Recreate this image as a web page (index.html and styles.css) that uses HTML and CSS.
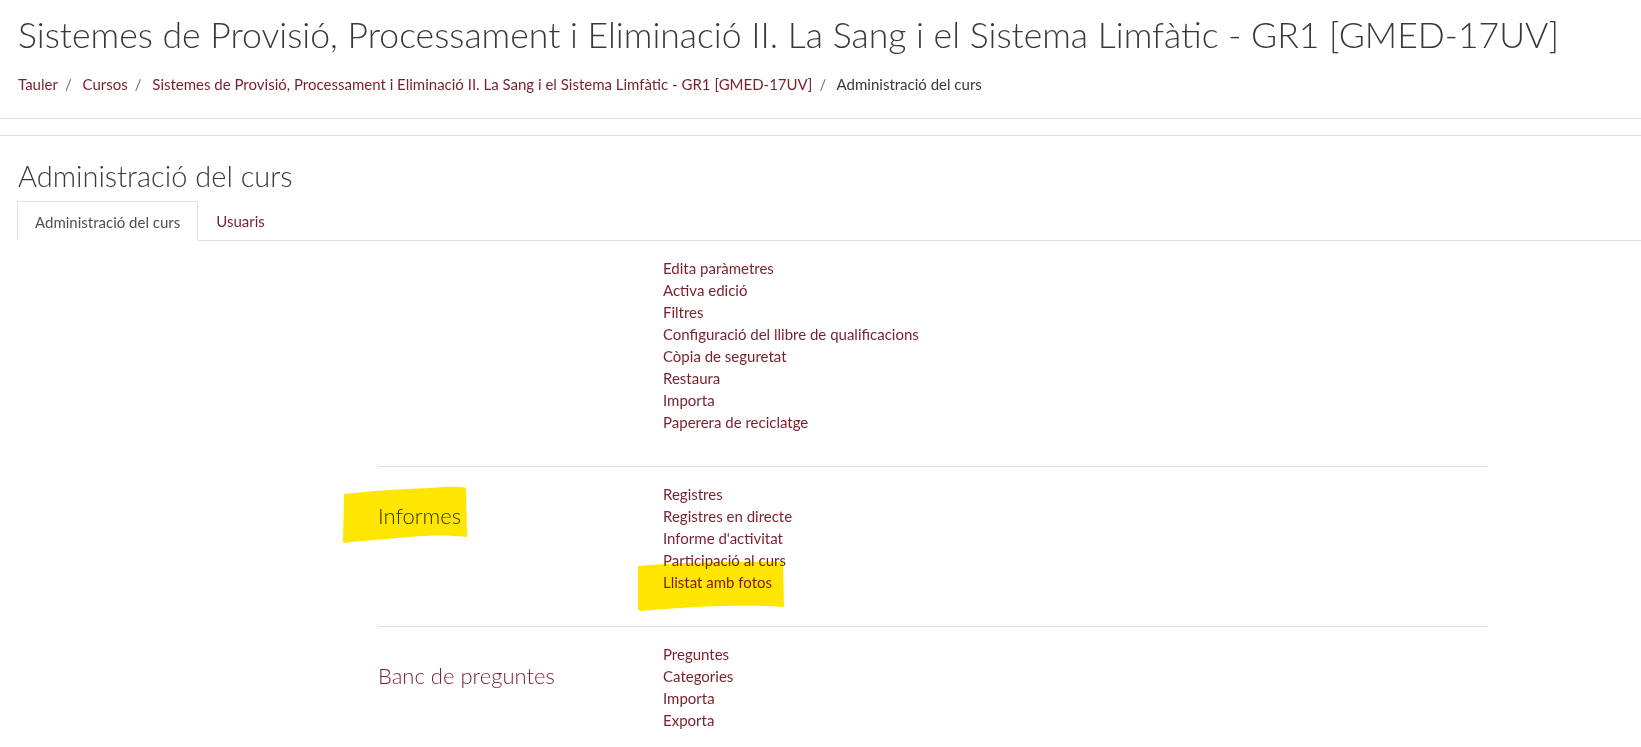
FILE: index.html
```html
<!DOCTYPE html>
<html lang="ca">
<head>
<meta charset="utf-8">
<title>Administració del curs</title>
<link rel="stylesheet" href="styles.css">
</head>
<body>
<header class="page-header">
  <h1 class="course-title">Sistemes de Provisió, Processament i Eliminació II. La Sang i el Sistema Limfàtic - GR1 [GMED-17UV]</h1>
  <nav class="breadcrumb">
    <a href="#">Tauler</a><span class="sep">/</span>
    <a href="#">Cursos</a><span class="sep">/</span>
    <a href="#">Sistemes de Provisió, Processament i Eliminació II. La Sang i el Sistema Limfàtic - GR1 [GMED-17UV]</a><span class="sep">/</span>
    <span class="current">Administració del curs</span>
  </nav>
</header>
<div class="divider"></div>
<main class="main">
  <h2 class="page-title">Administració del curs</h2>
  <ul class="tabs">
    <li class="tab active">Administració del curs</li>
    <li class="tab"><a href="#">Usuaris</a></li>
  </ul>
  <div class="sections">
    <section class="admin-row first">
      <div class="admin-head"></div>
      <ul class="admin-links">
        <li><a href="#">Edita paràmetres</a></li>
        <li><a href="#">Activa edició</a></li>
        <li><a href="#">Filtres</a></li>
        <li><a href="#">Configuració del llibre de qualificacions</a></li>
        <li><a href="#">Còpia de seguretat</a></li>
        <li><a href="#">Restaura</a></li>
        <li><a href="#">Importa</a></li>
        <li><a href="#">Paperera de reciclatge</a></li>
      </ul>
    </section>
    <section class="admin-row">
      <div class="admin-head"><h3 class="section-title plain">Informes</h3></div>
      <ul class="admin-links">
        <li><a href="#">Registres</a></li>
        <li><a href="#">Registres en directe</a></li>
        <li><a href="#">Informe d'activitat</a></li>
        <li><a href="#">Participació al curs</a></li>
        <li><a href="#">Llistat amb fotos</a></li>
      </ul>
    </section>
    <section class="admin-row">
      <div class="admin-head"><h3 class="section-title"><a href="#">Banc de preguntes</a></h3></div>
      <ul class="admin-links">
        <li><a href="#">Preguntes</a></li>
        <li><a href="#">Categories</a></li>
        <li><a href="#">Importa</a></li>
        <li><a href="#">Exporta</a></li>
      </ul>
    </section>
  </div>
</main>
<svg class="marker marker-a" width="130" height="60" viewBox="0 0 130 60" aria-hidden="true">
  <path d="M4 9 C30 6 60 4 90 3 C105 2 118 1 126 3 L127 52 C110 50 90 50 70 52 C50 54 30 55 12 57 L3 58 Z" fill="#ffe600"/>
</svg>
<svg class="marker marker-b" width="152" height="52" viewBox="0 0 152 52" aria-hidden="true">
  <path d="M3 6 C40 3 80 1 148 2 L149 47 C120 45 90 46 60 47 C40 48 20 50 5 51 L3 49 Z" fill="#ffe600"/>
</svg>
</body>
</html>
```

FILE: styles.css
```css
html, body {
  margin: 0;
  padding: 0;
  background: #ffffff;
}
body {
  font-family: "Lato", "Open Sans", sans-serif;
  font-size: 15px;
  color: #373a3c;
  position: relative;
  min-height: 747px;
  overflow: hidden;
}
a {
  color: #7a1f2c;
  text-decoration: none;
}
.page-header {
  padding: 15px 18px 0;
  border-bottom: 1px solid #dee2e6;
  box-sizing: border-box;
  height: 119px;
}
.course-title {
  margin: 0;
  font-weight: 300;
  font-size: 35.6px;
  line-height: 40px;
  white-space: nowrap;
  color: #373a3c;
}
.breadcrumb {
  margin-top: 18px;
  line-height: 22px;
  font-size: 15px;
  white-space: nowrap;
}
.breadcrumb .sep {
  color: #6c757d;
  padding: 0 7px 0 7px;
}
.breadcrumb .current {
  color: #373a3c;
}
.divider {
  height: 16px;
  border-bottom: 1px solid #dee2e6;
}
.main {
  padding: 0 0 0 17px;
}
.page-title {
  margin: 20px 0 0 1px;
  font-weight: 300;
  font-size: 29px;
  line-height: 40px;
  color: #373a3c;
}
.tabs {
  list-style: none;
  margin: 5px 0 0;
  padding: 0;
  display: flex;
  border-bottom: 1px solid #dee2e6;
}
.tab {
  height: 38px;
  box-sizing: border-box;
  padding: 0 17px;
  line-height: 38px;
  border: 1px solid transparent;
  margin-bottom: -1px;
  color: #495057;
}
.tab.active {
  border-color: #dee2e6 #dee2e6 #ffffff;
  background: #fff;
  height: 40px;
  line-height: 40px;
}
.sections {
  width: 1110px;
  margin: 16px 0 0 361px;
}
.admin-row {
  display: flex;
  align-items: flex-start;
  border-top: 1px solid #dee2e6;
  padding: 16px 0 33px;
}
.admin-row.first {
  border-top: none;
  padding-top: 0;
}
.admin-head {
  width: 285px;
  flex: none;
}
.section-title {
  margin: 18px 0 0;
  font-weight: 300;
  font-size: 22px;
  line-height: 30px;
  color: #373a3c;
}
.admin-links {
  list-style: none;
  margin: 0;
  padding: 0;
  line-height: 22px;
}
.marker {
  position: absolute;
  mix-blend-mode: multiply;
}
.marker-a {
  left: 340px;
  top: 485px;
}
.marker-b {
  left: 635px;
  top: 560px;
}
```
